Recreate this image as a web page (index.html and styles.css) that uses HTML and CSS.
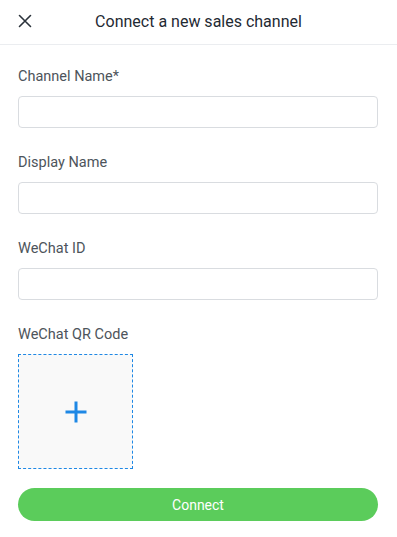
FILE: index.html
```html
<!DOCTYPE html>
<html>
<head>
<meta charset="utf-8">
<link rel="stylesheet" href="styles.css">
</head>
<body>
<header class="header">
  <button class="close" aria-label="Close">
    <svg width="14" height="14" viewBox="0 0 14 14"><path d="M1.5 1.5 L12.5 12.5 M12.5 1.5 L1.5 12.5" stroke="#2b333b" stroke-width="1.6" fill="none" stroke-linecap="round"/></svg>
  </button>
  <h1 class="title">Connect a new sales channel</h1>
</header>
<main class="form">
  <label class="label">Channel Name*</label>
  <input class="input" type="text">
  <label class="label">Display Name</label>
  <input class="input" type="text">
  <label class="label">WeChat ID</label>
  <input class="input" type="text">
  <label class="label">WeChat QR Code</label>
  <div class="upload">
    <svg width="24" height="24" viewBox="0 0 24 24"><path d="M12 1.5 V22.5 M1.5 12 H22.5" stroke="#1e88e5" stroke-width="3" fill="none"/></svg>
  </div>
  <button class="connect">Connect</button>
</main>
</body>
</html>
```
FILE: styles.css
```css
* { box-sizing: border-box; }
body {
  margin: 0;
  font-family: Roboto, "Liberation Sans", sans-serif;
  background: #fff;
  color: #4d545b;
}
.header {
  position: relative;
  height: 45px;
  border-bottom: 1px solid #ebedf0;
  display: flex;
  align-items: center;
  justify-content: center;
}
.close {
  position: absolute;
  left: 18px;
  top: 14px;
  width: 14px;
  height: 14px;
  padding: 0;
  border: 0;
  background: none;
  display: flex;
}
.title {
  margin: 0 0 2px;
  font-size: 16px;
  font-weight: 400;
  color: #1f2a33;
}
.form {
  padding: 20px 19px 0 18px;
  display: flex;
  flex-direction: column;
}
.label {
  font-size: 14.5px;
  line-height: 20px;
  padding-top: 2px;
  color: #4d545b;
  margin-bottom: 9px;
}
.input {
  height: 32px;
  border: 1px solid #d9dce0;
  border-radius: 4px;
  margin: 0 0 23px;
  width: 100%;
  font: inherit;
}
.upload {
  width: 115px;
  height: 115px;
  border: 1px dashed #1e88e5;
  background: #f9f9f9;
  display: flex;
  align-items: center;
  justify-content: center;
  margin-bottom: 19px;
}
.connect {
  height: 33px;
  border: 0;
  border-radius: 17px;
  background: #5bcc5b;
  color: #fff;
  font-family: Roboto, "Liberation Sans", sans-serif;
  font-size: 14px;
  font-weight: 400;
  width: 100%;
}
```
